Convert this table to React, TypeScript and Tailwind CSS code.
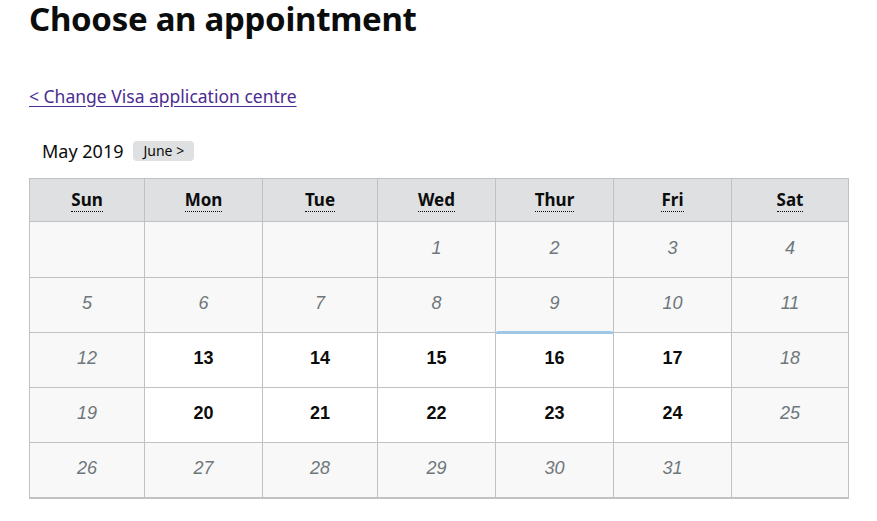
import React from "react";

const heads = ["Sun", "Mon", "Tue", "Wed", "Thur", "Fri", "Sat"];
const widths = ["w-[115px]", "w-[118px]", "w-[115px]", "w-[118px]", "w-[118px]", "w-[118px]", "w-[117px]"];

type Cell = { n?: number; avail?: boolean; hl?: boolean };

const rows: Cell[][] = [
  [{}, {}, {}, { n: 1 }, { n: 2 }, { n: 3 }, { n: 4 }],
  [{ n: 5 }, { n: 6 }, { n: 7 }, { n: 8 }, { n: 9 }, { n: 10 }, { n: 11 }],
  [{ n: 12 }, { n: 13, avail: true }, { n: 14, avail: true }, { n: 15, avail: true }, { n: 16, avail: true, hl: true }, { n: 17, avail: true }, { n: 18 }],
  [{ n: 19 }, { n: 20, avail: true }, { n: 21, avail: true }, { n: 22, avail: true }, { n: 23, avail: true }, { n: 24, avail: true }, { n: 25 }],
  [{ n: 26 }, { n: 27 }, { n: 28 }, { n: 29 }, { n: 30 }, { n: 31 }, {}],
];

export default function App() {
  return (
    <div
      className="w-[877px] h-[521px] bg-white overflow-hidden flex flex-col items-start pl-[29px]"
      style={{ fontFamily: '"Noto Sans", sans-serif' }}
    >
      <h1 className="text-[33px] font-bold text-[#0b0c0c] tracking-[-0.3px] leading-[37px] whitespace-nowrap">
        Choose an appointment
      </h1>
      <a href="#" className="mt-[47px] text-[17.5px] leading-[24px] text-[#4c2c92] underline underline-offset-[3px] whitespace-nowrap">
        &lt; Change Visa application centre
      </a>
      <div className="mt-[31px] pl-[13px] flex items-center gap-[10px]">
        <span className="text-[18px] leading-[24px] text-[#0b0c0c]">May 2019</span>
        <span className="bg-[#dee0e2] rounded-[4px] text-[14px] leading-[20px] px-[10px] text-[#0b0c0c]">June &gt;</span>
      </div>
      <table className="mt-[15px] border-collapse table-fixed w-[820px] border-b-2 border-b-[#bfc1c3]">
        <thead>
          <tr className="h-[43px] bg-[#dee0e2]">
            {heads.map((h, i) => (
              <th key={h} className={`${widths[i]} border border-[#bfc1c3] p-0 text-center`}>
                <abbr className="text-[17px] font-bold text-[#0b0c0c] no-underline border-b-[1.5px] border-dotted border-[#0b0c0c] leading-[18px]" title={h}>
                  {h}
                </abbr>
              </th>
            ))}
          </tr>
        </thead>
        <tbody>
          {rows.map((r, ri) => (
            <tr key={ri} className={ri === 0 ? "h-[56px]" : "h-[55px]"}>
              {r.map((c, ci) => (
                <td
                  key={ci}
                  className={`border border-[#bfc1c3] p-0 pb-[3px] text-center relative ${c.avail ? "bg-white" : "bg-[#f8f8f8]"}`}
                  style={{ fontFamily: '"Liberation Sans", Arial, sans-serif' }}
                >
                  {c.hl && <div className="absolute left-0 right-0 top-[-2px] h-[3px] bg-[#9fc8e6] rounded-t-[2px]" />}
                  {c.n !== undefined &&
                    (c.avail ? (
                      <span className="text-[18px] font-bold text-[#0b0c0c]">{c.n}</span>
                    ) : (
                      <span className="text-[18px] italic text-[#6f777b]">{c.n}</span>
                    ))}
                </td>
              ))}
            </tr>
          ))}
        </tbody>
      </table>
    </div>
  );
}
